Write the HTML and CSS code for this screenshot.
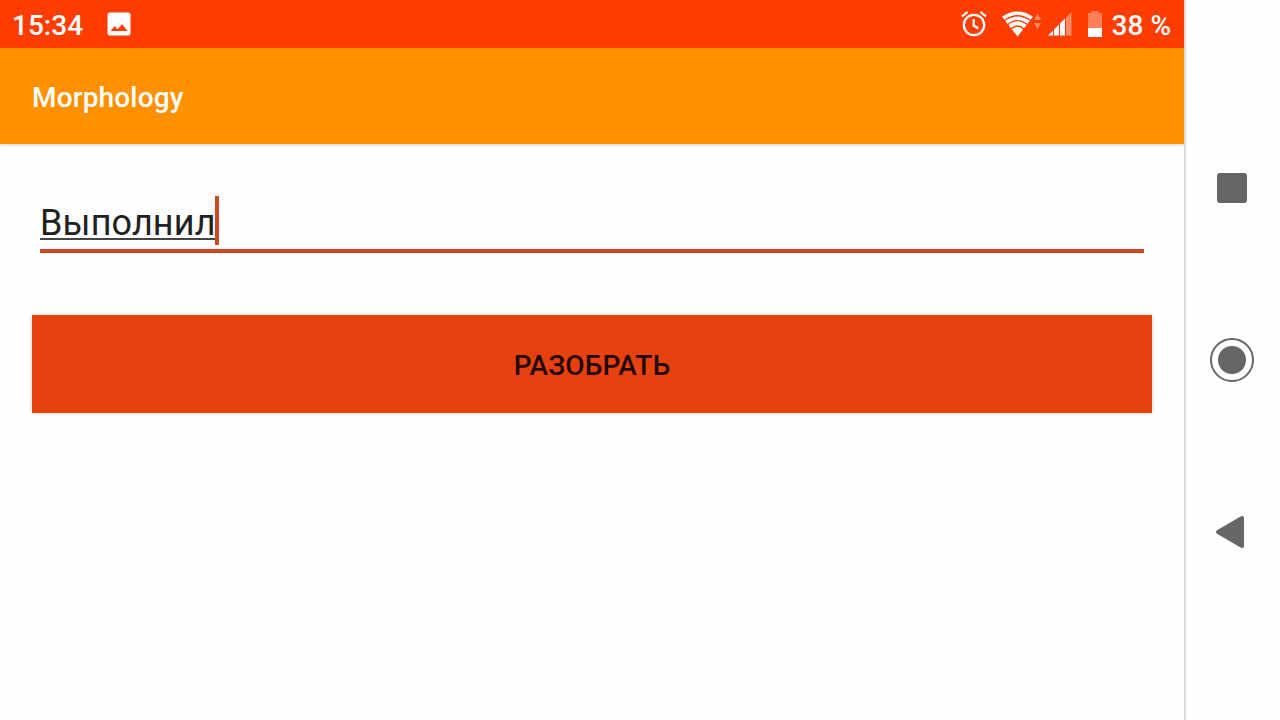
FILE: index.html
```html
<!DOCTYPE html>
<html lang="ru">
<head>
    <meta charset="UTF-8">
    <meta name="viewport" content="width=device-width, initial-scale=1.0">
    <title>Morphology</title>
    <link rel="stylesheet" href="styles.css">
</head>
<body>
    <div class="screen">
        <div class="status-bar">
            <span class="clock">15:34</span>
            <svg class="icon-image" width="24" height="24" viewBox="0 0 24 24">
                <path fill="#fff" fill-rule="evenodd" d="M3 .5h18A2.500 2.500 0 0 1 23.500 3v18a2.500 2.500 0 0 1-2.500 2.500H3A2.500 2.500 0 0 1 .5 21V3A2.500 2.500 0 0 1 3 .5zM3.500 19h17l-5.500-7-4.300 5.300-3-3.300z"/>
            </svg>

            <div class="status-icons">
                <svg class="icon-alarm" width="26" height="28" viewBox="0 0 26 28" fill="none" stroke="#fff" stroke-width="2.300">
                    <circle cx="13" cy="15" r="10.200"/>
                    <path d="M12.700 9v6.500l4.700 3M1 6.500l5.500-4.700M25 6.500l-5.500-4.700"/>
                </svg>
                <svg class="icon-wifi" width="40" height="26" viewBox="0 0 40 26">
                    <path fill="#fff" d="M0 5.800Q15.500-5 31 5.800L15.500 25.500z"/>
                    <g fill="none" stroke="#ff3d00" stroke-width="1.300">
                        <path d="M2.500 9.500Q15.500 0 28.500 9.500"/>
                        <path d="M5.500 13.800Q15.500 5.500 25.500 13.800"/>
                        <path d="M9 18Q15.500 12 22 18"/>
                    </g>
                    <path fill="#ff8a65" d="M32 9l3.500-6.500L39 9zM32 12h7l-3.500 6z"/>
                </svg>
                <svg class="icon-signal" width="24" height="24" viewBox="0 0 24 24">
                    <path fill="#fff" d="M0 23.500L17 6.500v17z"/>
                    <path fill="#ff8a65" d="M18 5.500L23.500 0v23.500H18z"/>
                    <path stroke="#ff3d00" stroke-width="1" d="M5.500 17v7M11.500 11v13M17.500 5v19"/>
                </svg>
                <svg class="icon-battery" width="14" height="26" viewBox="0 0 14 26">
                    <path fill="#ff8055" d="M3.500 0h7v2H14v15H0V2h3.500z"/>
                    <path fill="#fff" d="M0 17h14v9H0z"/>
                </svg>
                <span class="battery-level">38 %</span>
            </div>
        </div>

        <header class="app-bar">
            <h1>Morphology</h1>
        </header>

        <main class="content">
            <div class="text-field">
                <span class="word">Выполнил</span><span class="cursor"></span>
            </div>
            <button class="parse-btn" type="button">РАЗОБРАТЬ</button>
        </main>
    </div>

    <nav class="nav-bar">
        <svg width="44" height="44" viewBox="0 0 44 44">
            <rect x="7" y="7" width="30" height="30" rx="3" fill="#666"/>
        </svg>
        <svg width="44" height="44" viewBox="0 0 44 44">
            <circle cx="22" cy="22" r="21" fill="none" stroke="#666" stroke-width="2"/>
            <circle cx="22" cy="22" r="14" fill="#666"/>
        </svg>
        <svg width="44" height="44" viewBox="0 0 44 44">
            <path d="M8 22L32 8v28z" fill="#666" stroke="#666" stroke-width="4" stroke-linejoin="round"/>
        </svg>
    </nav>
</body>
</html>
```

FILE: styles.css
```css
* {
    margin: 0;
    padding: 0;
    box-sizing: border-box;
    font-family: Roboto, 'Liberation Sans', sans-serif;
}

body {
    display: flex;
    height: 100vh;
    background: #fefefe;
    overflow: hidden;
}

svg {
    display: block;
    flex: none;
}

.screen {
    flex: 1;
    display: flex;
    flex-direction: column;
}

.status-bar {
    display: flex;
    align-items: center;
    height: 48px;
    padding: 0 13px 0 12px;
    background: #ff3d00;
    color: #fff;
    font-size: 28px;
    font-weight: 500;
}

.clock,
.battery-level {
    line-height: 32px;
    padding-top: 4px;
}

.icon-image {
    margin-left: 24px;
}

.status-icons {
    display: flex;
    align-items: center;
    margin-left: auto;
}

.icon-wifi {
    margin-left: 15px;
}

.icon-signal {
    margin-left: 6px;
}

.icon-battery {
    margin: 0 10px 0 16px;
}

.app-bar {
    display: flex;
    align-items: center;
    height: 96px;
    padding: 2px 32px 0;
    background: #ff9100;
    color: #fff;
    box-shadow: 0 1px 3px rgba(0, 0, 0, 0.2);
}

h1 {
    font-size: 28px;
    font-weight: 500;
    letter-spacing: 0.15px;
}

.content {
    display: flex;
    flex-direction: column;
    padding: 52px 32px 0;
}

.text-field {
    display: flex;
    height: 57px;
    margin: 0 8px 62px;
    border-bottom: 4px solid #c94a22;
}

.word {
    height: 44px;
    border-bottom: 2px solid #444;
    color: #212121;
    font-size: 36px;
    line-height: 55px;
    letter-spacing: 0.13px;
}

.cursor {
    width: 4px;
    height: 49px;
    margin-left: -1px;
    background: #c94a22;
}

.parse-btn {
    height: 98px;
    padding-top: 3px;
    border: none;
    background: #e64210;
    color: #260500;
    font-size: 28px;
    font-weight: 500;
    letter-spacing: 0.1px;
    box-shadow: 0 0 4px rgba(0, 0, 0, 0.2);
}

.nav-bar {
    display: flex;
    flex-direction: column;
    align-items: center;
    justify-content: center;
    gap: 128px;
    width: 96px;
    padding-right: 2px;
    border-left: 2px solid #dcdcdc;
}
```
